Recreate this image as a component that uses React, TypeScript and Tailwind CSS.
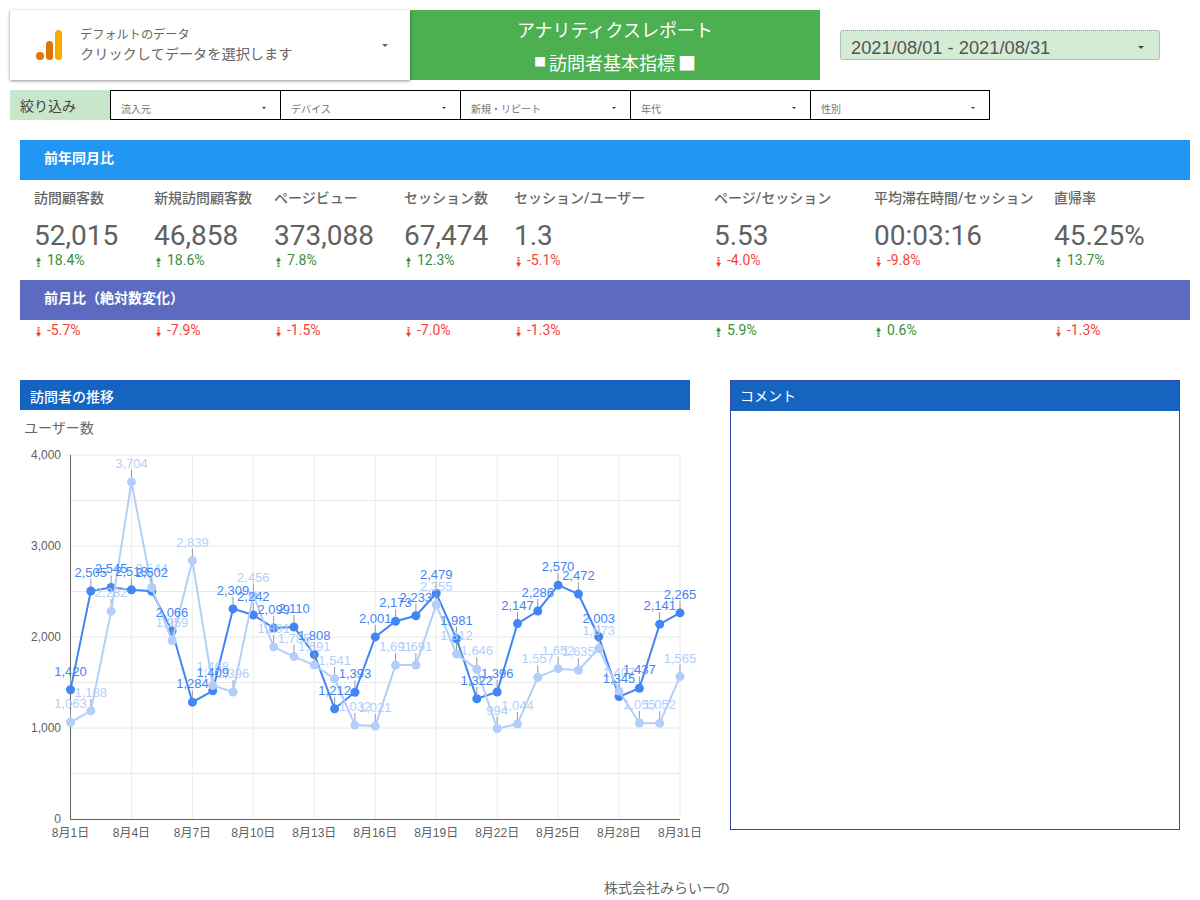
import React from 'react'

const blue = [1420, 2505, 2545, 2518, 2502, 2066, 1284, 1409, 2309, 2242, 2099, 2110, 1808, 1212, 1393, 2001, 2173, 2233, 2479, 1981, 1322, 1396, 2147, 2286, 2570, 2472, 2003, 1345, 1437, 2141, 2265]
const light = [1063, 1188, 2282, 3704, 2544, 1959, 2839, 1468, 1396, 2456, 1891, 1785, 1691, 1541, 1032, 1021, 1691, 1691, 2355, 1812, 1646, 994, 1044, 1557, 1652, 1635, 1873, 1407, 1055, 1052, 1565]

const metrics = [
  { label: '訪問顧客数', value: '52,015', yoy: '18.4%', yoyUp: true, mom: '-5.7%', momUp: false },
  { label: '新規訪問顧客数', value: '46,858', yoy: '18.6%', yoyUp: true, mom: '-7.9%', momUp: false },
  { label: 'ページビュー', value: '373,088', yoy: '7.8%', yoyUp: true, mom: '-1.5%', momUp: false },
  { label: 'セッション数', value: '67,474', yoy: '12.3%', yoyUp: true, mom: '-7.0%', momUp: false },
  { label: 'セッション/ユーザー', value: '1.3', yoy: '-5.1%', yoyUp: false, mom: '-1.3%', momUp: false },
  { label: 'ページ/セッション', value: '5.53', yoy: '-4.0%', yoyUp: false, mom: '5.9%', momUp: true },
  { label: '平均滞在時間/セッション', value: '00:03:16', yoy: '-9.8%', yoyUp: false, mom: '0.6%', momUp: true },
  { label: '直帰率', value: '45.25%', yoy: '13.7%', yoyUp: true, mom: '-1.3%', momUp: false },
]

const filters = [
  { label: '流入元', width: 'w-[170px]' },
  { label: 'デバイス', width: 'w-[180px]' },
  { label: '新規・リピート', width: 'w-[170px]' },
  { label: '年代', width: 'w-[180px]' },
  { label: '性別', width: 'w-[180px] border-r' },
]

const columns = 'grid grid-cols-[120px_120px_130px_110px_200px_160px_180px_1fr] items-start pl-[14px]'

function Caret({ className }: { className: string }) {
  return (
    <svg viewBox="0 0 6 3" className={className}>
      <path d="M0 0h6L3 3z" fill="currentColor" />
    </svg>
  )
}

function Delta({ text, up }: { text: string; up: boolean }) {
  return (
    <div className={`flex items-center gap-[6px] pl-[2px] text-sm leading-4 ${up ? 'text-[#388e3c]' : 'text-[#f44336]'}`}>
      <svg viewBox="0 0 5 10" className="mt-[3px] h-[10px] w-[5px]" fill="currentColor">
        {up ? (
          <path d="M2.5 0L5 4H3.5v1.5h-2V4H0zM1.5 6h2v1h-2zM1.5 7.6h2v.8h-2zM1.5 9h2v1h-2z" />
        ) : (
          <path d="M2.5 10L0 6h1.5V4.5h2V6H5zM1.5 4h2V3h-2zM1.5 2.4h2v-.8h-2zM1.5 1h2V0h-2z" />
        )}
      </svg>
      <span>{text}</span>
    </div>
  )
}

function Chart() {
  const px = (i: number) => 50.5 + (i * 609.5) / 30
  const py = (v: number) => 379 - v * 0.091
  const points = (data: number[]) => data.map((v, i) => `${px(i)},${py(v)}`).join(' ')
  const ticks = [0, 3, 6, 9, 12, 15, 18, 21, 24, 27, 30]
  const all = [
    { data: blue, color: '#4285f4', text: '#4285f4' },
    { data: light, color: '#b3cefb', text: '#b3cefb' },
  ]

  return (
    <svg
      width="690"
      height="410"
      viewBox="0 0 690 410"
      className="mt-[2px] block overflow-visible font-['Liberation_Sans','Noto_Sans_CJK_JP',sans-serif]"
    >
      {/* grid */}
      {[500, 1000, 1500, 2000, 2500, 3000, 3500, 4000].map((v) => (
        <line key={v} x1="50" x2="660" y1={py(v)} y2={py(v)} stroke="#e8e8e8" />
      ))}
      {ticks.slice(1).map((i) => (
        <line key={i} x1={px(i)} x2={px(i)} y1="15" y2="379" stroke="#ececec" />
      ))}
      <line x1="50.5" x2="50.5" y1="15" y2="379" stroke="#5f5f5f" />
      <line x1="50" x2="660" y1="379.5" y2="379.5" stroke="#5f5f5f" />

      {/* axis labels */}
      {[0, 1000, 2000, 3000, 4000].map((v) => (
        <text key={v} x="41" y={py(v) + 4} textAnchor="end" fontSize="12" fill="#5f5f5f">
          {v.toLocaleString('en-US')}
        </text>
      ))}
      {ticks.map((i) => (
        <text key={i} x={px(i)} y="397" textAnchor="middle" fontSize="12" fill="#5f5f5f">
          {`8月${i + 1}日`}
        </text>
      ))}

      {/* series */}
      {all.map((s) => (
        <g key={s.color}>
          {s.data.map((v, i) => (
            <line key={i} x1={px(i)} x2={px(i)} y1={py(v) - 12} y2={py(v) - 3} stroke="#999999" />
          ))}
          <polyline points={points(s.data)} fill="none" stroke={s.color} strokeWidth="2" />
          {s.data.map((v, i) => (
            <circle key={i} cx={px(i)} cy={py(v)} r="4.5" fill={s.color} />
          ))}
        </g>
      ))}
      {[all[1], all[0]].map((s) => (
        <g key={s.color}>
          {s.data.map((v, i) => (
            <text key={i} x={px(i)} y={py(v) - 14} textAnchor="middle" fontSize="13" fill={s.text}>
              {v.toLocaleString('en-US')}
            </text>
          ))}
        </g>
      ))}
    </svg>
  )
}

export default function App() {
  return (
    <div className="h-[900px] w-[1200px] overflow-hidden bg-white pt-[10px] font-['Roboto','Noto_Sans_CJK_JP',sans-serif] text-[#666666]">
      {/* Header */}
      <div className="ml-[10px] flex h-[70px]">
        <div className="z-10 flex w-[400px] items-center shadow-[0_1px_3px_rgba(0,0,0,0.45)]">
          <svg viewBox="0 0 26 30" className="ml-[26px] h-[30px] w-[26px]">
            <circle cx="4" cy="26" r="4" fill="#e37400" />
            <rect x="10" y="11" width="7" height="19" rx="3.5" fill="#e37400" />
            <rect x="19" y="0" width="7" height="30" rx="3.5" fill="#f9ab00" />
          </svg>
          <div className="ml-[18px] flex-1">
            <div className="text-[12.2px] leading-[18px]">デフォルトのデータ</div>
            <div className="text-[14.2px] leading-[20px]">クリックしてデータを選択します</div>
          </div>
          <Caret className="mr-[22px] h-[3px] w-[6px] text-[#666666]" />
        </div>
        <div className="flex w-[410px] flex-col items-center bg-[#4caf50] pt-[4px] text-[18px] leading-[33px] text-white">
          <div>アナリティクスレポート</div>
          <div className="flex items-center">
            <span className="w-[15px] text-[12px]">■</span>
            <span>訪問者基本指標</span>
            <span className="w-[21px] text-right">■</span>
          </div>
        </div>
        <div className="ml-[20px] mt-[20px] flex h-[30px] w-[320px] items-center justify-between rounded-[3px] border border-dotted border-[#8a9a8c] bg-[#d4ebd6] pl-[10px] pr-[15px] pt-[5px] font-['Liberation_Sans',sans-serif] text-[18.3px] text-[#555555]">
          <span>2021/08/01 - 2021/08/31</span>
          <Caret className="h-[3px] w-[6px] text-[#444444]" />
        </div>
      </div>

      {/* Filters */}
      <div className="ml-[10px] mt-[10px] flex h-[30px]">
        <div className="flex w-[100px] items-center bg-[#c8e6c9] pl-[10px] pt-[2px] text-sm text-[#444444]">絞り込み</div>
        {filters.map((f) => (
          <div key={f.label} className={`flex items-center justify-between border-y border-l border-black ${f.width} pl-[10px] pr-[14px]`}>
            <span className="pt-[8px] text-[10px] text-[#757575]">{f.label}</span>
            <Caret className="mt-[6px] h-[2px] w-[4px] text-[#333333]" />
          </div>
        ))}
      </div>

      {/* Metrics */}
      <div className="ml-[20px] mt-[20px] w-[1170px]">
        <div className="flex h-10 items-center bg-[#2196f3] pb-[4px] pl-[24px] text-sm font-bold text-white">前年同月比</div>
        <div className={`${columns} h-[100px] pt-[8px]`}>
          {metrics.map((m) => (
            <div key={m.label}>
              <div className="whitespace-nowrap text-sm font-medium leading-5">{m.label}</div>
              <div className="mt-[11px] text-[28px] leading-[33px] text-[#616161]">{m.value}</div>
              <Delta text={m.yoy} up={m.yoyUp} />
            </div>
          ))}
        </div>
        <div className="flex h-10 items-center bg-[#5c6bc0] pb-[4px] pl-[24px] text-sm font-bold text-white">前月比（絶対数変化）</div>
        <div className={`${columns} h-[60px] pt-[2px]`}>
          {metrics.map((m) => (
            <Delta key={m.label} text={m.mom} up={m.momUp} />
          ))}
        </div>
      </div>

      {/* Chart and comment */}
      <div className="ml-[20px] flex h-[450px] gap-[40px]">
        <div className="w-[670px]">
          <div className="flex h-[30px] items-center bg-[#1565c0] pl-[10px] pt-[3px] text-sm font-medium text-white">訪問者の推移</div>
          <div className="mt-[8px] pl-[4px] text-sm leading-5">ユーザー数</div>
          <Chart />
        </div>
        <div className="w-[450px] border border-[#3949ab]">
          <div className="flex h-[30px] items-center bg-[#1565c0] pl-[9px] text-sm text-white">コメント</div>
        </div>
      </div>

      {/* Footer */}
      <div className="ml-[604px] mt-[48px] text-sm leading-5">株式会社みらいーの</div>
    </div>
  )
}
